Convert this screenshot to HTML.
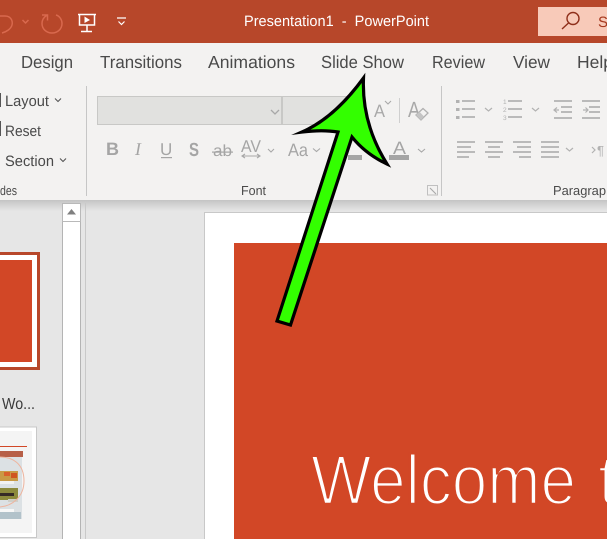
<!DOCTYPE html>
<html><head><meta charset="utf-8"><style>
html,body{margin:0;padding:0;background:#e6e6e6;width:607px;height:539px;overflow:hidden}
svg{display:block;font-family:"Liberation Sans",sans-serif}
</style></head><body>
<svg width="607" height="539" viewBox="0 0 607 539" xmlns="http://www.w3.org/2000/svg" text-rendering="geometricPrecision">
<defs>
<linearGradient id="sh" x1="0" y1="0" x2="0" y2="1"><stop offset="0" stop-color="#c4c4c4"/><stop offset="1" stop-color="#e6e6e6"/></linearGradient>
</defs>
<rect width="607" height="539" fill="#e6e6e6"/>
<!-- title bar -->
<rect width="607" height="43" fill="#b7472a"/>
<g fill="none" stroke="#d9694e" stroke-width="1.500">
<path d="M0 16H5C11 16 13 21 12 25C11 29 6 32 2 33"/>
<path d="M22.500 20L25.500 23L28.500 20"/>
<path d="M46.500 15.500C43.500 17.500 42 20.500 42 23.500C42 29 46.500 33 52 33C57.500 33 62 29 62 23.500C62 19.500 59.500 16 56 15M42 15H47.500V20.500"/>
</g>
<g fill="none" stroke="#fff" stroke-width="1.500">
<path d="M78 14.500H96M79.500 14.500V25H94.500V14.500M87 25V31M81 31.500H92"/>
<path d="M117 18H126M118.500 21.500L121.500 24.500L124.500 21.500" stroke-width="1.200"/>
</g>
<path d="M84.500 16.500L90 20L84.500 23Z" fill="#fff"/>
<text x="244" y="26" font-size="15" fill="#fff" textLength="185" lengthAdjust="spacingAndGlyphs" xml:space="preserve">Presentation1  -  PowerPoint</text>
<rect x="538" y="7" width="69" height="29" fill="#f8cab9"/>
<g fill="none" stroke="#8f2f1a" stroke-width="1.400"><circle cx="573" cy="18.500" r="6"/><path d="M568.500 23L562 29"/></g>
<text x="598" y="27" font-size="15" fill="#a63a20">S</text>
<!-- ribbon -->
<rect y="43" width="607" height="157" fill="#f3f2f1"/>
<rect y="200" width="607" height="11" fill="url(#sh)"/>
<g font-size="17.500" fill="#4a4a4a">
<text x="21" y="68" textLength="52" lengthAdjust="spacingAndGlyphs">Design</text>
<text x="100" y="68" textLength="82" lengthAdjust="spacingAndGlyphs">Transitions</text>
<text x="208" y="68" textLength="87" lengthAdjust="spacingAndGlyphs">Animations</text>
<text x="321" y="68" textLength="83" lengthAdjust="spacingAndGlyphs">Slide Show</text>
<text x="432" y="68" textLength="53" lengthAdjust="spacingAndGlyphs">Review</text>
<text x="513" y="68" textLength="37" lengthAdjust="spacingAndGlyphs">View</text>
<text x="577" y="68">Help</text>
</g>
<!-- slides group -->
<g font-size="15" fill="#4a4a4a">
<text x="5" y="106" textLength="44" lengthAdjust="spacingAndGlyphs">Layout</text>
<text x="5" y="136" textLength="36" lengthAdjust="spacingAndGlyphs">Reset</text>
<text x="5" y="166" textLength="49" lengthAdjust="spacingAndGlyphs">Section</text>
</g>
<g fill="none" stroke="#555" stroke-width="1.100">
<path d="M55 98.500L58 101.500L61 98.500M60 158.500L63 161.500L66 158.500"/>
</g>
<rect x="0" y="121" width="1" height="15" fill="#555"/><rect x="0" y="93" width="1" height="14" fill="#555"/>
<text x="0" y="195" font-size="13" fill="#4a4a4a" textLength="17" lengthAdjust="spacingAndGlyphs">des</text>
<rect x="86" y="86" width="1" height="110" fill="#c6c6c6"/>
<rect x="441" y="86" width="1" height="110" fill="#c6c6c6"/>
<!-- font boxes -->
<rect x="97.500" y="96.500" width="184" height="28" fill="#e1e1df" stroke="#c8c8c6"/>
<rect x="282.500" y="96.500" width="70" height="28" fill="#e1e1df" stroke="#c8c8c6"/>
<path d="M271 110L275 114L279 110" fill="none" stroke="#a8a8a8" stroke-width="1.300"/>
<text x="374" y="117" font-size="18" fill="#a8a8a8" textLength="11" lengthAdjust="spacingAndGlyphs">A</text>
<path d="M385 101L388 104L391 101" fill="none" stroke="#a8a8a8" stroke-width="1.100"/>
<rect x="399" y="98" width="1" height="25" fill="#cfcfcf"/>
<text x="408" y="117" font-size="22" fill="#a8a8a8" textLength="12" lengthAdjust="spacingAndGlyphs">A</text>
<path d="M416 115L423 108.500L428 113L421 120Z" fill="#f3f2f1" stroke="#b0b0b0" stroke-width="1.300"/>
<path d="M416 115L419.500 111.800L424 116.500L421 120Z" fill="#c4c4c4"/>
<!-- font row 2 -->
<g fill="#a5a5a5">
<text x="106" y="155" font-size="18" font-weight="bold">B</text>
<text x="135" y="155" font-size="18" font-style="italic" font-family="Liberation Serif">I</text>
<text x="160" y="155" font-size="17">U</text>
<rect x="161" y="157" width="11" height="1.200"/>
<text x="189" y="156" font-size="19" font-weight="bold" textLength="10" lengthAdjust="spacingAndGlyphs">S</text>
<text x="213" y="156" font-size="16" textLength="19" lengthAdjust="spacingAndGlyphs">ab</text>
<rect x="212" y="151.500" width="21" height="1.200"/>
<text x="241" y="152" font-size="17" textLength="20" lengthAdjust="spacingAndGlyphs">AV</text>
<text x="288" y="156" font-size="18" textLength="20" lengthAdjust="spacingAndGlyphs">Aa</text>
<text x="393" y="154" font-size="18" textLength="13" lengthAdjust="spacingAndGlyphs">A</text>
<rect x="389" y="155" width="20" height="5"/>
<rect x="348" y="155" width="14" height="5"/>
</g>
<g fill="none" stroke="#a8a8a8" stroke-width="1.100">
<path d="M242 156H260M245 154L242 156L245 158M257 154L260 156L257 158"/>
<path d="M268 149L271 152L274 149M313 148.500L316.500 151.500L320 148.500M418 149L421.500 152L425 149"/>
<path d="M430 188L436 194"/>
</g>
<path d="M427.500 195V185.500H437.500V195Z" fill="none" stroke="#c0c0c0"/>
<text x="241" y="195" font-size="13" fill="#4a4a4a" textLength="25" lengthAdjust="spacingAndGlyphs">Font</text>
<!-- paragraph -->
<g fill="none" stroke="#b2b2b2" stroke-width="1.700">
<path d="M462 101H475M462 109H475M462 117H475"/>
<path d="M508 101H522M508 109H522M508 117H522"/>
<path d="M554 101H572M561 107H572M561 112H572M554 118H572"/>
<path d="M582 101H600M589 107H600M589 112H600M582 118H600"/>
<path d="M457 142H475M457 147H471M457 152H475M457 157H469"/>
<path d="M485 142H503M488 147H500M485 152H503M488 157H500"/>
<path d="M513 142H531M517 147H531M513 152H531M519 157H531"/>
<path d="M541 142H559M541 147H559M541 152H559M541 157H559"/>
</g>
<g fill="#b2b2b2">
<rect x="456" y="100" width="3.500" height="3"/><rect x="456" y="108" width="3.500" height="3"/><rect x="456" y="116" width="3.500" height="3"/>
</g>
<g font-size="6.500" fill="#b2b2b2"><text x="503" y="104">1</text><text x="503" y="112">2</text><text x="503" y="120">3</text></g>
<g fill="none" stroke="#b2b2b2" stroke-width="1.200">
<path d="M485 108L488.500 111L492 108M532 108L535.500 111L539 108M566 148L569.500 151L573 148"/>
<path d="M554 110H559M557 107.500L554 110L557 112.500M583 110H588M585.500 107.500L588 110L585.500 112.500"/>
<path d="M592 147L595 150L592 153"/>
</g>
<text x="597" y="155" font-size="13" fill="#b2b2b2">¶</text>
<text x="553" y="195" font-size="13" fill="#4a4a4a" textLength="53" lengthAdjust="spacingAndGlyphs">Paragrap</text>
<!-- left pane -->
<rect x="0" y="252" width="40" height="118" fill="#b7472a"/>
<rect x="0" y="255" width="37" height="112" fill="#fff"/>
<rect x="0" y="260" width="32" height="102" fill="#d24726"/>
<text x="2" y="409" font-size="16" fill="#3a3a3a" textLength="33" lengthAdjust="spacingAndGlyphs">Wo...</text>
<rect x="-1" y="427" width="37.500" height="110.500" fill="#fff" stroke="#c8c8c8"/>
<rect x="0" y="431" width="32" height="102" fill="#f4f4f4"/>
<rect x="0" y="446" width="27" height="1" fill="#d24726"/>
<rect x="0" y="451" width="23" height="6" fill="#b75f47"/>
<rect x="0" y="457" width="22" height="62" fill="#dce1e4"/>
<rect x="0" y="471" width="18" height="10" fill="#c99a45"/>
<rect x="4" y="472" width="6" height="4" fill="#d9622c"/>
<rect x="11" y="473" width="6" height="5" fill="#d0561f"/>
<rect x="0" y="481" width="14" height="3" fill="#f2f2f2"/>
<rect x="0" y="488" width="18" height="12" fill="#8c8a3c"/>
<rect x="0" y="493" width="14" height="3" fill="#352a26"/>
<rect x="8" y="499" width="10" height="3" fill="#cfcfc8"/>
<rect x="0" y="509" width="14" height="3" fill="#f7f7f7"/>
<rect x="0" y="512" width="21" height="7" fill="#b2c2ca"/>
<path d="M0 457C12 457 24 463 24 481C24 497 12 506 0 507" fill="none" stroke="#eeb49e" stroke-width="1"/>
<!-- scrollbar -->
<rect x="62.500" y="203.500" width="18" height="336" fill="#fff" stroke="#b4b4b4"/>
<rect x="62.500" y="203.500" width="18" height="18" fill="#fff" stroke="#b9b9b9"/>
<path d="M67 214.500L71.500 209L76 214.500Z" fill="#808080"/>
<rect x="85" y="203" width="1" height="336" fill="#c9c9c9"/>
<!-- slide -->
<rect x="204.500" y="212.500" width="410" height="340" fill="#fff" stroke="#c8c8c8"/>
<rect x="234" y="243" width="373" height="296" fill="#d24726"/>
<text x="311" y="504" font-size="70" fill="#fff" stroke="#d24726" stroke-width="2.400" textLength="265" lengthAdjust="spacingAndGlyphs">Welcome</text>
<text x="598" y="504" font-size="70" fill="#fff" stroke="#d24726" stroke-width="2.400">t</text>
<!-- arrow -->
<path d="M363.500 78C346 102 325 122 302 132C314 130.500 326 130 338 132L277 321L290.500 325L352 137C360 147 372 157 387 164C372 140 362 112 363.500 78Z" fill="#33ff00" stroke="#000" stroke-width="3.200" stroke-linejoin="miter" stroke-miterlimit="8"/>
</svg>
</body></html>
